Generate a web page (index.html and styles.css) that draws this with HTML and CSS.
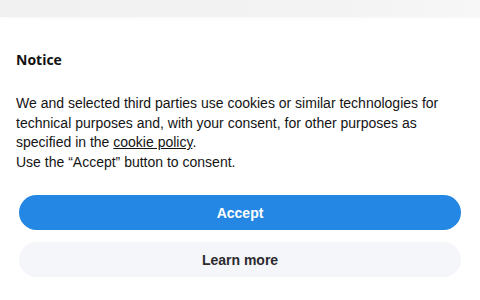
FILE: index.html
```html
<!DOCTYPE html>
<html lang="en">
<head>
<meta charset="utf-8">
<link rel="stylesheet" href="styles.css">
</head>
<body>
<div class="topband"></div>
<div class="banner">
  <h2 class="title">Notice</h2>
  <p class="text">We and selected third parties use cookies or similar technologies for technical purposes and, with your consent, for other purposes as specified in the <a class="link" href="#">cookie policy</a>.<br>Use the “Accept” button to consent.</p>
  <div class="buttons">
    <button class="btn btn-primary">Accept</button>
    <button class="btn btn-secondary">Learn more</button>
  </div>
</div>
</body>
</html>
```
FILE: styles.css
```css
html, body {
  margin: 0;
  padding: 0;
  background: #ffffff;
}
body {
  width: 480px;
  height: 300px;
  overflow: hidden;
}
.topband {
  height: 17px;
  background: linear-gradient(to right, #f1f1f1 0%, #f3f3f3 70%, #f7f7f7 100%);
  box-shadow: 0 1px 3px rgba(0,0,0,0.03);
}
.banner {
  padding: 0 16px;
}
.title {
  margin: 0;
  padding-top: 33px;
  font-family: "Open Sans", sans-serif;
  font-weight: 700;
  font-size: 14px;
  line-height: 20px;
  color: #111;
}
.text {
  margin: 24px 0 0;
  font-family: "Liberation Sans", Arial, sans-serif;
  font-size: 14px;
  line-height: 19.5px;
  color: #141414;
}
.link {
  color: #141414;
  text-decoration: underline;
}
.buttons {
  display: flex;
  flex-direction: column;
  gap: 12px;
  margin: 23px 3px 0;
}
.btn {
  height: 35px;
  border: none;
  border-radius: 18px;
  font-family: "Liberation Sans", Arial, sans-serif;
  font-weight: 700;
  font-size: 14px;
  cursor: pointer;
}
.btn-primary {
  background: #2487e3;
  color: #ffffff;
}
.btn-secondary {
  background: #f5f6f9;
  color: #2b2b30;
}
```
